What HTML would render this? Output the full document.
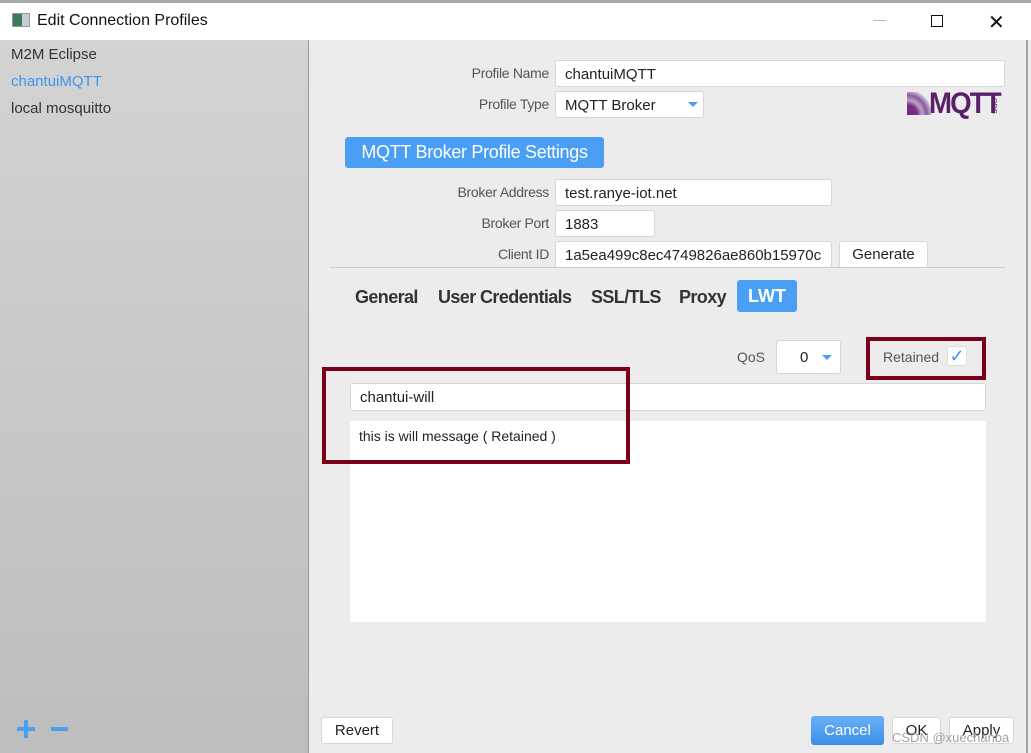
<!DOCTYPE html>
<html><head><meta charset="utf-8"><style>
*{box-sizing:border-box;margin:0;padding:0}
body{width:1031px;height:753px;overflow:hidden;font-family:"Liberation Sans",sans-serif;background:#ececec;position:relative;font-size:14px;color:#333}
.a{position:absolute}
.inp{position:absolute;background:#fff;border:1px solid #d6d6d6;border-radius:3px;padding-left:9px;font-size:15px;color:#222;display:flex;align-items:center;padding-top:1px}
.lbl{position:absolute;font-size:14px;color:#555;text-align:right;width:200px;letter-spacing:-0.3px}
.btn{position:absolute;background:#fff;border:1px solid #d8d8d8;border-radius:3px;font-size:15px;color:#222;display:flex;align-items:center;justify-content:center}
.tab{position:absolute;top:287px;font-size:18px;font-weight:bold;color:#333;letter-spacing:-0.6px;white-space:nowrap}
.caret{position:absolute;width:0;height:0;border-left:5px solid transparent;border-right:5px solid transparent;border-top:5px solid #4a9ff5}
</style></head><body>
<div class="a" style="left:0;top:0;width:1031px;height:3px;background:#a8a8a8"></div>
<div class="a" style="left:0;top:3px;width:1031px;height:37px;background:#fff"></div>
<div class="a" style="left:12px;top:13px;width:18px;height:14px;border:1px solid #999;background:linear-gradient(90deg,#3a7a5a 0 55%,#c8ccd4 55%)"></div>
<div class="a" style="left:37px;top:12px;font-size:16px;color:#111">Edit Connection Profiles</div>
<div class="a" style="left:873px;top:20px;width:13px;height:1px;background:#bbb"></div>
<div class="a" style="left:931px;top:15px;width:12px;height:12px;border:1px solid #111"></div>
<div class="a" style="left:988px;top:10px;font-size:20px;color:#111">✕</div>
<div class="a" style="left:0;top:40px;width:309px;height:713px;background:linear-gradient(#d3d3d3,#bdbdbd);border-right:1px solid #999"></div>
<div class="a" style="left:11px;top:46px;font-size:15px;color:#333">M2M Eclipse</div>
<div class="a" style="left:11px;top:73px;font-size:15px;color:#3d95f0">chantuiMQTT</div>
<div class="a" style="left:11px;top:100px;font-size:15px;color:#333">local mosquitto</div>
<div class="a" style="left:17px;top:727px;width:18px;height:4px;background:#4a9ff5"></div>
<div class="a" style="left:24px;top:720px;width:4px;height:18px;background:#4a9ff5"></div>
<div class="a" style="left:51px;top:727px;width:17px;height:4px;background:#4a9ff5"></div>
<div class="a" style="left:1026px;top:40px;width:2px;height:713px;background:#a0a0a0"></div>
<div class="a" style="left:1028px;top:40px;width:3px;height:713px;background:#ececec"></div>

<div class="lbl" style="left:349px;top:65px">Profile Name</div>
<div class="inp" style="left:555px;top:60px;width:450px;height:27px">chantuiMQTT</div>
<div class="lbl" style="left:349px;top:96px">Profile Type</div>
<div class="inp" style="left:555px;top:91px;width:149px;height:27px">MQTT Broker</div>
<div class="caret" style="left:688px;top:102px"></div>
<div class="a" style="left:907px;top:92px;width:24px;height:23px;background:radial-gradient(circle at 0 100%,#7a2a80 30%,#b9a6c8 45%,#8a5a98 60%,#d0c8dc 75%,transparent 76%)"></div>
<div class="a" style="left:929px;top:87px;font-size:30px;font-weight:bold;color:#5a1f68;letter-spacing:-2px;transform:scaleX(0.92);transform-origin:left">MQTT</div>
<div class="a" style="left:997px;top:96px;font-size:7px;color:#5a1f68;transform:rotate(90deg);transform-origin:left top">.ORG</div>
<div class="a" style="left:345px;top:137px;width:259px;height:31px;background:#4a9ff5;border-radius:3px;color:#fff;font-size:18px;display:flex;align-items:center;justify-content:center;letter-spacing:-0.3px">MQTT Broker Profile Settings</div>
<div class="lbl" style="left:349px;top:184px">Broker Address</div>
<div class="inp" style="left:555px;top:179px;width:277px;height:27px">test.ranye-iot.net</div>
<div class="lbl" style="left:349px;top:215px">Broker Port</div>
<div class="inp" style="left:555px;top:210px;width:100px;height:27px">1883</div>
<div class="lbl" style="left:349px;top:246px">Client ID</div>
<div class="inp" style="left:555px;top:241px;width:277px;height:27px;overflow:hidden;white-space:nowrap">1a5ea499c8ec4749826ae860b15970c</div>
<div class="btn" style="left:839px;top:241px;width:89px;height:27px">Generate</div>
<div class="a" style="left:330px;top:267px;width:675px;height:1px;background:#ccc"></div>
<div class="tab" style="left:355px">General</div>
<div class="tab" style="left:438px">User Credentials</div>
<div class="tab" style="left:591px">SSL/TLS</div>
<div class="tab" style="left:679px">Proxy</div>
<div class="a" style="left:737px;top:280px;width:60px;height:32px;background:#4a9ff5;border-radius:3px;color:#fff;font-size:18px;font-weight:bold;display:flex;align-items:center;justify-content:center">LWT</div>
<div class="a" style="left:737px;top:349px;font-size:14px;color:#555">QoS</div>
<div class="inp" style="left:776px;top:340px;width:65px;height:34px;padding-left:23px">0</div>
<div class="caret" style="left:822px;top:355px"></div>
<div class="a" style="left:866px;top:337px;width:120px;height:43px;border:4px solid #7a0019"></div>
<div class="a" style="left:883px;top:349px;font-size:14px;color:#555">Retained</div>
<div class="a" style="left:947px;top:346px;width:20px;height:20px;background:#fff;border:1px solid #ddd;border-radius:2px;color:#3d95f0;font-size:18px;line-height:18px;text-align:center">✓</div>
<div class="inp" style="left:350px;top:383px;width:636px;height:28px">chantui-will</div>
<div class="a" style="left:350px;top:421px;width:636px;height:201px;background:#fff"></div>
<div class="a" style="left:359px;top:428px;font-size:14px;color:#222">this is will message ( Retained )</div>
<div class="a" style="left:322px;top:367px;width:308px;height:97px;border:4px solid #7a0019"></div>

<div class="btn" style="left:321px;top:717px;width:72px;height:27px">Revert</div>
<div class="a" style="left:811px;top:716px;width:73px;height:29px;background:linear-gradient(#6ab0f8,#3a8ee8);border-radius:3px;color:#fff;font-size:15px;display:flex;align-items:center;justify-content:center">Cancel</div>
<div class="btn" style="left:892px;top:717px;width:49px;height:27px">OK</div>
<div class="btn" style="left:949px;top:717px;width:65px;height:27px">Apply</div>
<div class="a" style="left:892px;top:730px;font-size:13px;color:#999;opacity:.9">CSDN @xuechanba</div>
</body></html>
